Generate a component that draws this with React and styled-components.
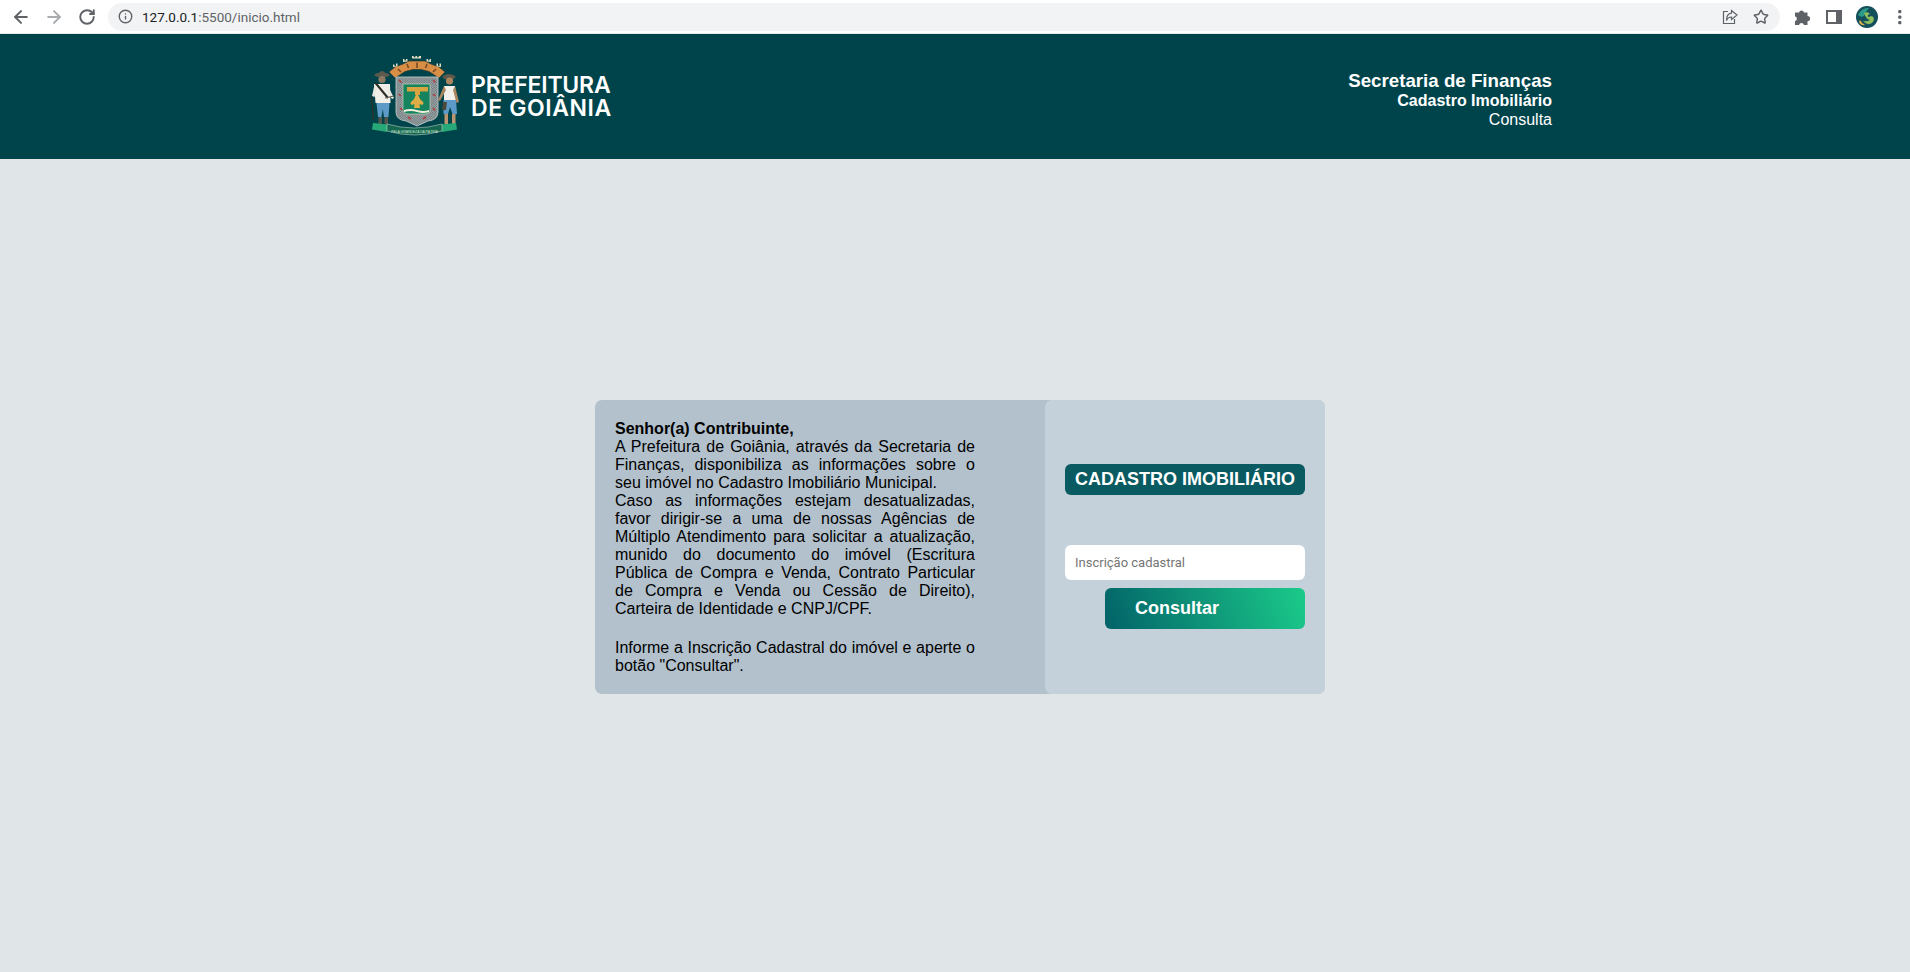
import React from "react";
import styled, { createGlobalStyle } from "styled-components";
import { ArrowLeft, ArrowRight, RotateCw, Info, Star } from "lucide-react";

const GlobalStyle = createGlobalStyle`
  html, body {
    margin: 0;
    padding: 0;
    height: 100%;
    background: #e0e5e8;
    font-family: "Liberation Sans", Arial, sans-serif;
  }
`;

const Page = styled.div`
  display: flex;
  flex-direction: column;
  height: 972px;
  overflow: hidden;
`;

const BrowserBar = styled.div`
  display: flex;
  align-items: center;
  box-sizing: border-box;
  height: 34px;
  flex: none;
  background: #fff;
  padding: 0 7px 0 11px;
  border-bottom: 1px solid #e6e9ea;
`;

const NavButton = styled.span`
  display: flex;
  width: 20px;
  justify-content: center;
  margin-right: 13px;
  color: ${(p) => (p.$off ? "#a9acaf" : "#5f6368")};
`;

const AddressBar = styled.div`
  display: flex;
  align-items: center;
  flex: 1;
  height: 28px;
  margin-left: -2px;
  padding: 0 11px 0 10px;
  border-radius: 14px;
  background: #f1f3f4;
  color: #5f6368;
  font-family: Roboto, sans-serif;
  font-size: 13.5px;
`;

const Url = styled.span`
  margin-left: 9px;
  flex: 1;
  b {
    font-weight: 400;
    color: #202124;
  }
`;

const BarIcon = styled.span`
  display: flex;
  margin-left: ${(p) => p.$gap || 0}px;
  color: #5f6368;
`;

const Header = styled.header`
  display: flex;
  justify-content: space-between;
  align-items: center;
  flex: none;
  height: 125px;
  padding: 0 358px 0 365px;
  background: #00444b;
  color: #fff;
`;

const Brand = styled.div`
  display: flex;
  align-items: center;
  gap: 1px;
`;

const BrandName = styled.div`
  font-family: Inter, sans-serif;
  font-weight: 600;
  font-size: 23px;
  line-height: 23px;
`;

const BrandLine = styled.div`
  letter-spacing: ${(p) => p.$spread}px;
`;

const Titles = styled.div`
  padding-top: 5px;
  text-align: right;
`;

const Title = styled.div`
  font-size: ${(p) => p.$size}px;
  font-weight: ${(p) => (p.$bold ? 700 : 400)};
  line-height: ${(p) => p.$line}px;
`;

const Main = styled.main`
  flex: 1;
  display: flex;
  justify-content: center;
  padding: 241px 0 0 10px;
`;

const Card = styled.section`
  display: flex;
  width: 730px;
  height: 294px;
  border-radius: 7px;
  background: #b2c1cc;
`;

const Notice = styled.div`
  width: 450px;
  flex: none;
  box-sizing: border-box;
  padding: 20px 70px 0 20px;
  font-size: 16px;
  line-height: 18px;
  color: #000;
  text-align: justify;
  p {
    margin: 0;
  }
  p + p {
    margin-top: 3px;
  }
`;

const FormPanel = styled.div`
  flex: 1;
  display: flex;
  flex-direction: column;
  align-items: flex-end;
  padding: 64px 20px 0 20px;
  border-radius: 7px;
  background: #c4d1da;
`;

const Heading = styled.h1`
  margin: 0 0 50px;
  width: 100%;
  height: 31px;
  border-radius: 6px;
  background: #0a5a62;
  color: #fff;
  font-size: 18px;
  font-weight: 700;
  line-height: 30px;
  text-align: center;
  white-space: nowrap;
`;

const Field = styled.input`
  width: 100%;
  height: 35px;
  box-sizing: border-box;
  padding: 0 10px;
  border: 0;
  border-radius: 6px;
  background: #fff;
  font-family: Roboto, sans-serif;
  font-size: 13px;
  &::placeholder {
    color: #757575;
    opacity: 1;
  }
`;

const SubmitButton = styled.button`
  width: 200px;
  height: 41px;
  margin-top: 8px;
  padding: 0 0 0 30px;
  border: 0;
  border-radius: 6px;
  background: linear-gradient(70deg, #026268, #1bcb8a);
  color: #fff;
  font-family: "Liberation Sans", Arial, sans-serif;
  font-size: 18px;
  font-weight: 700;
  text-align: left;
`;

const ShareIcon = () => (
  <svg width="18" height="18" viewBox="0 0 18 18" fill="none" stroke="currentColor" strokeWidth="1.2">
    <path d="M7 3.5H2.5v12h11V11" />
    <path d="M10.5 2.5 16 7l-5.5 4.5V9C8 9 6.500 10 5.500 12.500 5.500 8.500 7.500 5.500 10.500 5.200z" />
  </svg>
);

const PuzzleIcon = () => (
  <svg width="18" height="18" viewBox="0 0 18 18" fill="currentColor">
    <path d="M2 4.500h4a2.600 2.600 0 0 1 5 0h3.500V8a2.600 2.600 0 0 1 0 5.200V17H11a2.600 2.600 0 0 0-5 0H2v-3.800a2.600 2.600 0 0 0 0-5z" />
  </svg>
);

const SidePanelIcon = () => (
  <svg width="16" height="16" viewBox="0 0 16 16">
    <path d="M1 2h14v12H1z" fill="#fff" stroke="#5f6368" strokeWidth="2" />
    <path d="M10 2h5v12h-5z" fill="#5f6368" />
  </svg>
);

const DotsIcon = () => (
  <svg width="6" height="16" viewBox="0 0 6 16" fill="#5f6368">
    <rect x="1.2" y="1" width="3.2" height="3.2" rx="1" />
    <rect x="1.2" y="6.500" width="3.2" height="3.2" rx="1" />
    <rect x="1.2" y="12" width="3.2" height="3.2" rx="1" />
  </svg>
);

const AvatarIcon = () => (
  <svg width="22" height="22" viewBox="0 0 22 22">
    <circle cx="11" cy="11" r="11" fill="#14505c" />
    <path d="M2 9 Q6 1 13 2 Q9 6 8 10 Q5 12 2 9Z" fill="#2e9b8a" />
    <path d="M8 7 Q12 5 14 8 Q11 9 12 11 L16 10 Q20 13 16 17 Q11 20 7 15 Q11 16 14 14 Q10 13 8 7Z" fill="#8dbd5c" />
    <path d="M4 14 Q6 18 9 19 Q5 20 3 16Z" fill="#e0b24a" />
  </svg>
);

// brasao desenhado na mesma escala do recorte (105x90)
const CoatOfArms = () => (
  <svg width="105" height="90" viewBox="0 0 105 90">
    <defs>
      <pattern id="xadrez" width="2.4" height="2.4" patternUnits="userSpaceOnUse">
        <rect width="2.4" height="2.4" fill="#aeb6b6" />
        <rect width="1.2" height="1.2" fill="#5f6c70" />
        <rect x="1.2" y="1.2" width="1.2" height="1.2" fill="#5f6c70" />
      </pattern>
    </defs>
    {/* coroa */}
    <path d="M24 20 L30 15 L38 12 L44 9 L60 9 L66 12 L74 15 L80 20 L74 26 L64 19.500 L56 17.500 L48 17.500 L40 19.500 L30 26 Z" fill="#d88f45" stroke="#2b3a33" strokeWidth="0.7" />
    <path d="M33 17l3 3M42 12l1.500 4M52 10.500v5.500M62 12l-1.500 4M71 17l-3 3" stroke="#7a4a24" strokeWidth="1.600" />
    <path d="M28 15v-2.500h1.500V14H31v-2.500h1.500V14.500zM38 10V7h1.500v1.500H41V7h1.500v2.500zM47 6.500V4h1.700v1.200h1.700V4h1.700v1.200h1.700V4H56v2.500zM61.500 9.500V7H63v1.500h1.500V7H66v3zM71.500 14.500V11.500H73V14h1.500v-2.500H76V15z" fill="#e2dcc2" />
    {/* escudo */}
    <path d="M31 25 H73 V60 Q73 68 63 69 L52 74 L41 69 Q31 68 31 60 Z" fill="url(#xadrez)" stroke="#c9cfce" strokeWidth="0.8" />
    <path d="M38 32 H65 V58 Q65 62 59 62 H44 Q38 62 38 58 Z" fill="#16835f" stroke="#dcdcc8" strokeWidth="0.6" />
    <path d="M42 35 H63 V39.500 H55 V43 H50 V39.500 H42 Z" fill="#d9a43f" />
    <path d="M52 42 C55 45 54 47 57 49 C59 50 59 52 57 53 L54.500 52 L55 56 H49 L49.500 52 L47 53 C45 52 45 50 47 49 C50 47 49 45 52 42Z" fill="#dcae45" />
    <path d="M39 58 Q45 56 52 58 T64 58 V60 Q58 62 52 60 T39 60Z" fill="#eef0dc" />
    <g stroke="#b23c40" strokeWidth="1.600">
      <path d="M34 28l2.500 2.500M68 28l2.500 2.500M33.500 42l2.500 2M68 42l2.500 2M35 56l2.500 2M68 56l2 2.500M43 65l3 2M58 67l3-2" />
    </g>
    {/* homem da esquerda */}
    <ellipse cx="17" cy="23" rx="7.500" ry="2.600" fill="#5b5a4c" />
    <path d="M12.500 23 Q17 15 21.500 23Z" fill="#5b5a4c" />
    <circle cx="17" cy="27.500" r="3.600" fill="#8d7a63" />
    <path d="M9 32 H25 L25.500 51 H10.500 Z" fill="#f0eee6" />
    <path d="M10.500 31 L23 46" stroke="#2c2c26" strokeWidth="2" />
    <path d="M9.500 33 L7 44 L9.500 45 L12 36Z" fill="#ebe8df" />
    <path d="M24 36 L29 46 L27 47 L23 41Z" fill="#ebe8df" />
    <path d="M11.500 51 H24.500 L23.500 65 H19 L17.800 57 L16.500 65 H13 Z" fill="#5e9ac8" />
    <path d="M13.500 65 H17 V72 H13.500Z M19.500 65 H23 V72 H19.500Z" fill="#55574e" />
    <path d="M6.500 44 L8.500 68" stroke="#2e3128" strokeWidth="1.300" />
    <path d="M20 46 L29 44" stroke="#5d5b4c" strokeWidth="1.200" />
    {/* homem da direita */}
    <ellipse cx="84" cy="25" rx="6.500" ry="2.800" fill="#5d584a" />
    <path d="M79.500 25 Q84 19 88.500 25Z" fill="#5d584a" />
    <circle cx="84.500" cy="29" r="3.600" fill="#a98560" />
    <path d="M79 34 H90 L91 48 H79 Z" fill="#f2f0ea" />
    <path d="M79 34 L73 48 L75 49 L81 38Z M90 34 L94 50 L91.500 51 L88 38Z" fill="#a98560" />
    <path d="M78.500 48 H91 L92 62 H87.500 L85 55 L83 62 H78.500 Z" fill="#5e9ac8" />
    <path d="M79.500 62 H83 V72 H79.500Z M87 62 H90.500 V72 H87Z" fill="#bc9570" />
    <path d="M78 50 L77 58 L81 58 L82 50Z" fill="#4c4a3f" />
    {/* faixa */}
    <path d="M8 71 L23 72.500 L22 80 L7 77.500 Z M91 71 L76 72.500 L77 80 L92 77.500 Z" fill="#27a877" />
    <path d="M22 72 Q49 80 77 72 L77 79 Q49 87 22 79 Z" fill="#16664f" stroke="#d4e8da" strokeWidth="0.5" />
    <text x="49.500" y="80.500" fontFamily="Liberation Sans, sans-serif" fontSize="3.400" fill="#cfe6d8" textAnchor="middle">PELA GRANDEZA DA PÁTRIA</text>
  </svg>
);

export default function App() {
  return (
    <Page>
      <GlobalStyle />
      <BrowserBar>
        <NavButton><ArrowLeft size={20} strokeWidth={2.400} /></NavButton>
        <NavButton $off><ArrowRight size={20} strokeWidth={2.400} /></NavButton>
        <NavButton><RotateCw size={18} strokeWidth={2.600} /></NavButton>
        <AddressBar>
          <Info size={15} strokeWidth={2.200} />
          <Url><b>127.0.0.1</b>:5500/inicio.html</Url>
          <BarIcon><ShareIcon /></BarIcon>
          <BarIcon $gap={14}><Star size={16} strokeWidth={2.200} /></BarIcon>
        </AddressBar>
        <BarIcon $gap={13}><PuzzleIcon /></BarIcon>
        <BarIcon $gap={15}><SidePanelIcon /></BarIcon>
        <BarIcon $gap={14}><AvatarIcon /></BarIcon>
        <BarIcon $gap={19}><DotsIcon /></BarIcon>
      </BrowserBar>
      <Header>
        <Brand>
          <CoatOfArms />
          <BrandName>
            <BrandLine $spread={-0.2}>PREFEITURA</BrandLine>
            <BrandLine $spread={0.6}>DE GOIÂNIA</BrandLine>
          </BrandName>
        </Brand>
        <Titles>
          <Title $size={18.720} $line={20} $bold>Secretaria de Finanças</Title>
          <Title $size={16} $line={20} $bold>Cadastro Imobiliário</Title>
          <Title $size={16} $line={17}>Consulta</Title>
        </Titles>
      </Header>
      <Main>
        <Card>
          <Notice>
            <p>
              <strong>Senhor(a) Contribuinte,</strong><br />
              A Prefeitura de Goiânia, através da Secretaria de Finanças, disponibiliza as informações sobre o seu imóvel no Cadastro Imobiliário Municipal.<br />
              Caso as informações estejam desatualizadas, favor dirigir-se a uma de nossas Agências de Múltiplo Atendimento para solicitar a atualização, munido do documento do imóvel (Escritura Pública de Compra e Venda, Contrato Particular de Compra e Venda ou Cessão de Direito), Carteira de Identidade e CNPJ/CPF.
            </p>
            <p>
              <br />
              Informe a Inscrição Cadastral do imóvel e aperte o botão "Consultar".
            </p>
          </Notice>
          <FormPanel>
            <Heading>CADASTRO IMOBILIÁRIO</Heading>
            <Field placeholder="Inscrição cadastral" />
            <SubmitButton>Consultar</SubmitButton>
          </FormPanel>
        </Card>
      </Main>
    </Page>
  );
}
